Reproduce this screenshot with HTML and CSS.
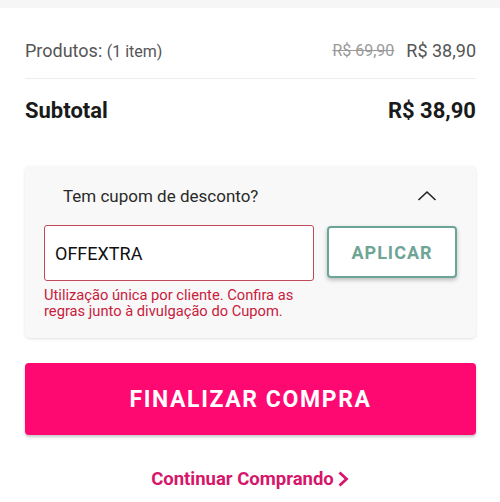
FILE: index.html
```html
<!DOCTYPE html>
<html lang="pt-BR">
<head>
<meta charset="utf-8">
<title>Resumo</title>
<link rel="stylesheet" href="styles.css">
</head>
<body>
<div class="topbar"></div>
<main class="summary">
  <div class="row products">
    <span class="label">Produtos: <small>(1 item)</small></span>
    <span class="prices"><s class="old">R$ 69,90</s><span class="now">R$ 38,90</span></span>
  </div>
  <div class="row subtotal">
    <span>Subtotal</span>
    <span>R$ 38,90</span>
  </div>
  <section class="coupon">
    <div class="coupon-head">
      <span>Tem cupom de desconto?</span>
      <svg class="chev-up" width="20" height="11" viewBox="0 0 20 11"><path d="M1.5 10 L10 2 L18.5 10" fill="none" stroke="#222" stroke-width="1.6"/></svg>
    </div>
    <div class="coupon-form">
      <div class="field">
        <div class="input">OFFEXTRA</div>
        <p class="hint">Utilização única por cliente. Confira as regras junto à divulgação do Cupom.</p>
      </div>
      <button class="apply">APLICAR</button>
    </div>
  </section>
  <button class="checkout">FINALIZAR COMPRA</button>
  <a class="continue" href="#">Continuar Comprando<svg width="14" height="18" viewBox="0 0 14 18"><path d="M3.5 2.5 L10.5 9 L3.5 15.5" fill="none" stroke="#d6166a" stroke-width="2.8"/></svg></a>
</main>
</body>
</html>
```
FILE: styles.css
```css
* { box-sizing: border-box; }
body {
  margin: 0;
  background: #fff;
  font-family: Roboto, "Liberation Sans", Arial, sans-serif;
  color: #222;
}
.topbar {
  height: 8px;
  background: #f6f6f6;
}
.summary {
  padding: 0 24px 0 25px;
  display: flex;
  flex-direction: column;
}
.row {
  display: flex;
  justify-content: space-between;
  align-items: center;
}
.products {
  margin-top: 23px;
  height: 48px;
  padding-bottom: 8px;
  border-bottom: 1px solid #ececec;
  color: #555;
  font-size: 18px;
}
.products small {
  font-size: 16px;
}
.prices {
  display: flex;
  align-items: center;
  gap: 12px;
}
.old {
  color: #999;
  font-size: 16px;
}
.now {
  font-size: 18px;
}
.subtotal {
  height: 62px;
  font-weight: 700;
  font-size: 22px;
  color: #1a1a1a;
}
.coupon {
  margin-top: 25px;
  background: #f8f8f8;
  border-radius: 5px;
  box-shadow: 0 1px 3px rgba(0,0,0,0.12);
  padding: 0 19px 19px 19px;
}
.coupon-head {
  height: 59px;
  display: flex;
  justify-content: space-between;
  align-items: center;
  padding: 0 20px 0 19px;
  font-size: 17px;
  color: #2a2a2a;
}
.coupon-form {
  display: flex;
  gap: 13px;
  align-items: flex-start;
}
.field {
  flex: 0 0 270px;
}
.input {
  height: 56px;
  background: #fff;
  border: 1px solid #c04a5c;
  border-radius: 3px;
  padding-left: 10px;
  display: flex;
  align-items: center;
  font-size: 18px;
  color: #111;
}
.hint {
  margin: 6px 0 0;
  font-size: 14.7px;
  line-height: 16px;
  color: #c8203c;
}
.apply {
  flex: 0 0 130px;
  height: 52px;
  margin-top: 1px;
  background: #fff;
  border: 2px solid #6aa698;
  border-radius: 4px;
  box-shadow: 0 2px 4px rgba(0,0,0,0.25);
  font-family: inherit;
  font-weight: 700;
  font-size: 18px;
  letter-spacing: 1px;
  color: #6fa596;
}
.checkout {
  margin-top: 25px;
  height: 72px;
  background: #fe0872;
  border: none;
  border-radius: 4px;
  box-shadow: 0 2px 3px rgba(0,0,0,0.22);
  color: #fff;
  font-family: inherit;
  font-weight: 700;
  font-size: 23px;
  letter-spacing: 1.6px;
}
.continue {
  margin-top: 32px;
  align-self: center;
  display: flex;
  align-items: center;
  gap: 2px;
  font-weight: 700;
  font-size: 18.5px;
  line-height: 24px;
  color: #d6166a;
  text-decoration: none;
}
```
